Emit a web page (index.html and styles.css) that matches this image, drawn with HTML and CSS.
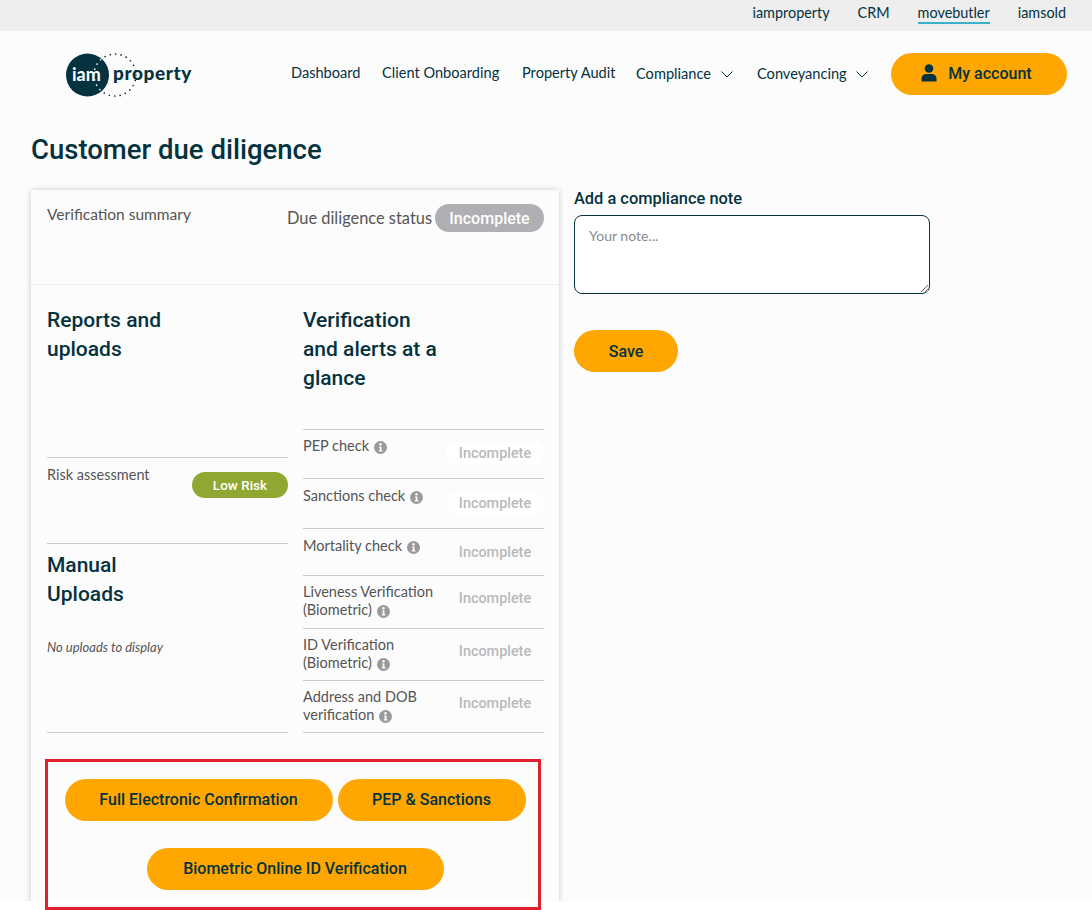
FILE: index.html
```html
<!DOCTYPE html>
<html lang="en">
<head>
    <meta charset="UTF-8">
    <meta name="viewport" content="width=device-width, initial-scale=1.0">
    <title>Customer due diligence</title>
    <link rel="stylesheet" href="styles.css">
</head>
<body>
    <div class="page">
        <div class="top-bar">
            <a href="#">iamproperty</a>
            <a href="#">CRM</a>
            <a href="#" class="active">movebutler</a>
            <a href="#">iamsold</a>
        </div>

        <header class="site-header">
            <a href="#" class="logo">
                <svg width="130" height="46" viewBox="0 0 130 46">
                    <defs>
                        <clipPath id="logoClip"><circle cx="21.5" cy="22" r="21.5"/></clipPath>
                    </defs>
                    <circle cx="21.5" cy="22" r="21.5" fill="#04323f"/>
                    <circle cx="49" cy="22" r="21" class="logo-dots"/>
                    <circle cx="49" cy="22" r="21" class="logo-dots-light" clip-path="url(#logoClip)"/>
                    <text x="6" y="28" class="logo-iam">iam</text>
                    <text x="47" y="27" class="logo-name">property</text>
                </svg>
            </a>
            <nav class="main-nav">
                <a href="#" class="nav-dashboard">Dashboard</a>
                <a href="#" class="nav-onboarding">Client Onboarding</a>
                <a href="#" class="nav-audit">Property Audit</a>
                <a href="#" class="nav-compliance">Compliance
                    <svg class="chevron" width="12" height="7" viewBox="0 0 12 7"><path d="M0.5 0.5L6 6L11.5 0.5"/></svg>
                </a>
                <a href="#" class="nav-conveyancing">Conveyancing
                    <svg class="chevron" width="12" height="7" viewBox="0 0 12 7"><path d="M0.5 0.5L6 6L11.5 0.5"/></svg>
                </a>
            </nav>
            <a href="#" class="btn account-btn">
                <svg width="16" height="18" viewBox="0 0 16 18"><circle cx="8" cy="4.5" r="4.3"/><path d="M0.5 17.5V14.5C0.5 11.5 3 10 5 10H11C13 10 15.5 11.5 15.5 14.5V17.5Z"/></svg>
                My account
            </a>
        </header>

        <main class="content">
            <h1>Customer due diligence</h1>
            <div class="layout">
                <section class="card">
                    <div class="summary">
                        <span class="summary-title">Verification summary</span>
                        <div class="status">
                            <span class="status-label">Due diligence status</span>
                            <span class="status-pill">Incomplete</span>
                        </div>
                    </div>

                    <div class="columns">
                        <div class="col">
                            <h2 class="reports-title">Reports and<br>uploads</h2>
                            <div class="risk-row">
                                <span>Risk assessment</span>
                                <span class="risk-pill">Low Risk</span>
                            </div>
                            <h2 class="manual-title">Manual<br>Uploads</h2>
                            <p class="no-uploads">No uploads to display</p>
                        </div>

                        <div class="col">
                            <h2 class="alerts-title">Verification<br>and alerts at a<br>glance</h2>
                            <div class="check-list">
                                <div class="check-row row-49">
                                    <div class="check-name">PEP check <svg class="info" viewBox="0 0 12 12"><use href="#infoIcon"/></svg></div>
                                    <span class="check-pill">Incomplete</span>
                                </div>
                                <div class="check-row row-50">
                                    <div class="check-name">Sanctions check <svg class="info" viewBox="0 0 12 12"><use href="#infoIcon"/></svg></div>
                                    <span class="check-pill">Incomplete</span>
                                </div>
                                <div class="check-row row-47">
                                    <div class="check-name">Mortality check <svg class="info" viewBox="0 0 12 12"><use href="#infoIcon"/></svg></div>
                                    <span class="check-pill">Incomplete</span>
                                </div>
                                <div class="check-row row-53">
                                    <div class="check-name">Liveness Verification<br>(Biometric) <svg class="info" viewBox="0 0 12 12"><use href="#infoIcon"/></svg></div>
                                    <span class="check-pill">Incomplete</span>
                                </div>
                                <div class="check-row row-52">
                                    <div class="check-name">ID Verification<br>(Biometric) <svg class="info" viewBox="0 0 12 12"><use href="#infoIcon"/></svg></div>
                                    <span class="check-pill">Incomplete</span>
                                </div>
                                <div class="check-row row-52">
                                    <div class="check-name">Address and DOB<br>verification <svg class="info" viewBox="0 0 12 12"><use href="#infoIcon"/></svg></div>
                                    <span class="check-pill">Incomplete</span>
                                </div>
                            </div>
                        </div>
                    </div>

                    <div class="actions">
                        <a href="#" class="btn action-full">Full Electronic Confirmation</a>
                        <a href="#" class="btn action-pep">PEP &amp; Sanctions</a>
                        <a href="#" class="btn action-bio">Biometric Online ID Verification</a>
                    </div>
                </section>

                <section class="note">
                    <label for="note">Add a compliance note</label>
                    <textarea id="note" placeholder="Your note..."></textarea>
                    <button class="btn save-btn" type="button">Save</button>
                </section>
            </div>
        </main>
    </div>

    <div class="highlight"></div>

    <svg width="0" height="0" class="icon-defs">
        <symbol id="infoIcon" viewBox="0 0 12 12">
            <circle cx="6" cy="6" r="6" fill="#9a9a9a"/>
            <circle cx="6" cy="3" r="1.1" fill="#fff"/>
            <path d="M4.6 5H6.9V8.6H7.8V9.6H4.4V8.6H5.3V6H4.6Z" fill="#fff"/>
        </symbol>
    </svg>
</body>
</html>
```

FILE: styles.css
```css
html, body {
    margin: 0;
    height: 910px;
    overflow: hidden;
    background: #fff;
}
body {
    position: relative;
    font-family: "Lato", "Liberation Sans", sans-serif;
    color: #04323f;
}
a {
    color: inherit;
    text-decoration: none;
}
.icon-defs {
    position: absolute;
}
.page {
    height: 901px;
    overflow: hidden;
    background: #fcfcfc;
}

/* top strip */
.top-bar {
    height: 31px;
    box-sizing: border-box;
    background: #eeeeee;
    display: flex;
    justify-content: flex-end;
    gap: 28px;
    padding: 4px 26px 0 0;
    font-size: 14.4px;
    line-height: 18px;
}
.top-bar .active {
    height: 18px;
    border-bottom: 2px solid #3bb0cb;
}

/* header */
.site-header {
    height: 77px;
    position: relative;
    display: flex;
    align-items: flex-start;
    padding: 22px 25px 0 66px;
}
.logo {
    display: block;
    width: 225px;
    height: 46px;
}
.logo svg {
    display: block;
}
.logo-dots, .logo-dots-light {
    fill: none;
    stroke: #04323f;
    stroke-width: 1.7;
    stroke-linecap: round;
    stroke-dasharray: 0 5.5;
}
.logo-dots-light {
    stroke: #fff;
}
.logo-iam {
    font-size: 18px;
    font-weight: 700;
    fill: #fff;
}
.logo-name {
    font-size: 19px;
    font-weight: 900;
    fill: #04323f;
    letter-spacing: 0.6px;
}
.main-nav {
    display: flex;
    font-size: 14.6px;
    line-height: 18px;
    padding-top: 11px;
    width: 600px;
}
.nav-dashboard { width: 91px; }
.nav-onboarding { width: 140px; }
.nav-audit { width: 114px; }
.nav-compliance { width: 121px; margin-top: 1px; }
.nav-conveyancing { margin-top: 1px; }
.chevron {
    margin-left: 6px;
    vertical-align: 1px;
    fill: none;
    stroke: #04323f;
    stroke-width: 1;
}
.btn {
    display: inline-block;
    box-sizing: border-box;
    border: none;
    border-radius: 21px;
    height: 42px;
    line-height: 41px;
    background: #ffa600;
    color: #04323f;
    font-family: "Roboto", sans-serif;
    font-size: 16px;
    font-weight: 500;
    text-align: center;
}
.account-btn {
    position: absolute;
    left: 891px;
    top: 22px;
    width: 176px;
    padding-right: 5px;
}
.account-btn svg {
    fill: #04323f;
    vertical-align: -3px;
    margin-right: 7px;
}

/* main */
.content {
    padding: 2px 31px 0;
}
h1 {
    margin: 0;
    font-family: "Roboto", sans-serif;
    font-size: 27.5px;
    line-height: 36px;
    font-weight: 500;
}
.layout {
    display: flex;
    align-items: flex-start;
    gap: 15px;
    margin-top: 22px;
}
.card {
    width: 528px;
    background: #fcfcfc;
    box-shadow: 0 0 6px rgba(0,0,0,0.2);
    flex: none;
}
.summary {
    height: 95px;
    box-sizing: border-box;
    border-bottom: 1px solid #eeeeee;
    padding: 14px 15px 0 16px;
    display: flex;
    justify-content: space-between;
    align-items: flex-start;
    color: #555;
}
.summary-title {
    font-size: 15.5px;
    line-height: 20px;
}
.status {
    display: flex;
    align-items: center;
    gap: 3px;
    font-size: 16.4px;
}
.status-label {
    margin-top: -2px;
}
.status-pill {
    width: 109px;
    height: 28px;
    line-height: 29px;
    border-radius: 14px;
    background: #b0afb3;
    color: #fff;
    font-family: "Roboto", sans-serif;
    font-weight: 500;
    font-size: 16px;
    text-align: center;
}
.columns {
    display: grid;
    grid-template-columns: 241px 241px;
    gap: 15px;
    padding: 21px 15px 0 16px;
}
h2 {
    margin: 0;
    font-family: "Roboto", sans-serif;
    font-size: 21px;
    line-height: 29px;
    font-weight: 500;
}
.reports-title {
    height: 151px;
}
.risk-row {
    height: 87px;
    box-sizing: border-box;
    border-top: 1px solid #ccc;
    border-bottom: 1px solid #ccc;
    display: flex;
    justify-content: space-between;
    align-items: flex-start;
    padding-top: 8px;
    font-size: 14.5px;
    line-height: 18px;
    color: #555;
}
.risk-pill {
    width: 96px;
    height: 26px;
    line-height: 26px;
    margin-top: 6px;
    border-radius: 13px;
    background: #8fa832;
    color: #fff;
    font-family: "Roboto", sans-serif;
    font-weight: 500;
    font-size: 13.5px;
    text-align: center;
}
.manual-title {
    margin-top: 7px;
}
.no-uploads {
    margin: 0;
    height: 124px;
    box-sizing: border-box;
    padding-top: 30px;
    font-size: 13px;
    line-height: 16px;
    font-style: italic;
    color: #555;
    border-bottom: 1px solid #ccc;
}
.alerts-title {
    height: 123px;
}
.check-list {
    border-bottom: 1px solid #ccc;
}
.check-row {
    box-sizing: border-box;
    border-top: 1px solid #ccc;
    display: flex;
    justify-content: space-between;
    padding-top: 7px;
    font-size: 14.5px;
    line-height: 18px;
    color: #555;
}
.row-49 { height: 49px; }
.row-50 { height: 50px; padding-top: 8px; }
.row-47 { height: 47px; padding-top: 8px; }
.row-53 { height: 53px; }
.row-52 { height: 52px; }
.info {
    width: 13px;
    height: 13px;
    vertical-align: -3px;
    margin-left: 1px;
}
.check-pill {
    width: 98px;
    height: 23px;
    line-height: 23px;
    margin-top: 4px;
    border-radius: 12px;
    color: #b9b9bb;
    font-family: "Roboto", sans-serif;
    font-weight: 500;
    font-size: 14.4px;
    text-align: center;
}
.row-49 .check-pill, .row-50 .check-pill {
    margin-top: 5px;
    background: #fff;
}
.actions {
    display: flex;
    flex-wrap: wrap;
    justify-content: center;
    gap: 27px 5px;
    padding: 46px 0 60px 0;
}
.action-full { width: 268px; }
.action-pep { width: 188px; }
.action-bio { width: 297px; }

/* note */
.note {
    flex: none;
    width: 356px;
    margin-top: -1px;
}
.note label {
    display: block;
    font-family: "Roboto", sans-serif;
    font-size: 16.4px;
    font-weight: 500;
    line-height: 19px;
    margin-bottom: 7px;
}
.note textarea {
    display: block;
    width: 356px;
    height: 79px;
    box-sizing: border-box;
    border: 1px solid #04323f;
    border-radius: 8px;
    background: #fff;
    padding: 11px 14px;
    font-family: inherit;
    font-size: 14px;
}
.note textarea::placeholder {
    color: #8a8a8a;
}
.save-btn {
    width: 104px;
    margin-top: 36px;
}

/* red annotation box over the buttons */
.highlight {
    position: absolute;
    left: 45px;
    top: 759px;
    width: 496px;
    height: 151px;
    box-sizing: border-box;
    border: 3px solid #e0202c;
}
```
